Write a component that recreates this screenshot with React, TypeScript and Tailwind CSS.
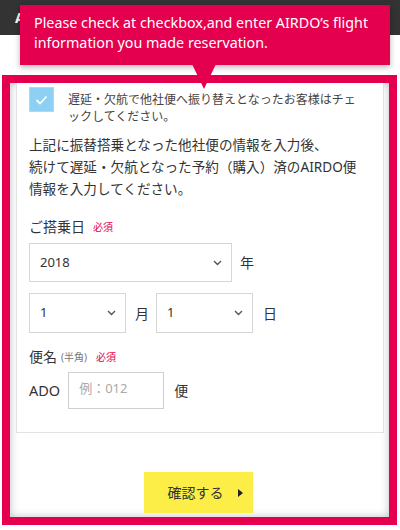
import { useState } from "react";

const PINK = "bg-[#e5004f]";

function Chevron() {
  return (
    <svg width="9" height="6" viewBox="0 0 9 6" className="text-[#555]">
      <path d="M1 1l3.5 3.5L8 1" fill="none" stroke="currentColor" strokeWidth="1.4" />
    </svg>
  );
}

function FakeSelect({ value, className }: { value: string; className: string }) {
  return (
    <div
      className={`flex items-center justify-between border border-[#d6d6d6] bg-white pl-[10px] pr-[9px] text-[13px] text-[#333] ${className}`}
    >
      <span>{value}</span>
      <Chevron />
    </div>
  );
}

export default function App() {
  const [checked, setChecked] = useState(true);
  const [flight, setFlight] = useState("");

  return (
    <div
      className="relative h-[530px] w-[400px] overflow-hidden bg-white text-[#333]"
      style={{ fontFamily: '"Noto Sans", "Noto Sans CJK JP", sans-serif' }}
    >
      {/* header, mostly hidden by the tooltip */}
      <div className="flex h-[35px] items-center bg-[#333] pl-[15px] text-[14px] font-bold text-white">A</div>

      {/* highlighted form area */}
      <div className="ml-[2px] mt-[40px] h-[450px] w-[395px] border-[8px] border-[#e5004f] shadow-[inset_0_0_8px_rgba(0,0,0,0.25)]">
        <div className="ml-[6px] mr-[5px] border-x border-b border-[#e2e2e2] bg-white pb-[23px] pl-[12px] pr-[10px] pt-[4px]">
          <label className="flex cursor-pointer items-start gap-[14px]">
            <button
              type="button"
              onClick={() => setChecked(!checked)}
              className={`flex h-[25px] w-[25px] shrink-0 items-center justify-center border border-[#cfcfcf] ${
                checked ? "bg-[#8dd0f3]" : "bg-white"
              }`}
            >
              {checked && (
                <svg width="13" height="10" viewBox="0 0 13 10">
                  <path d="M1.5 5l3.5 3.5L11.5 1.5" fill="none" stroke="white" strokeWidth="1.8" />
                </svg>
              )}
            </button>
            <span className="pt-[4px] text-[12px] leading-[17px] text-[#444]">
              遅延・欠航で他社便へ振り替えとなったお客様はチェ
              <br />
              ックしてください。
            </span>
          </label>

          <p className="mt-[9px] text-[13.6px] leading-[22px] text-[#333]">
            上記に振替搭乗となった他社便の情報を入力後、
            <br />
            続けて遅延・欠航となった予約（購入）済のAIRDO便
            <br />
            情報を入力してください。
          </p>

          <div className="mt-[17px] flex items-center gap-[8px] leading-[20px]">
            <span className="text-[14px]">ご搭乗日</span>
            <span className="text-[10px] text-[#e5004f]">必須</span>
          </div>

          <div className="mt-[6px] flex items-center gap-[8px]">
            <FakeSelect value="2018" className="h-[39px] w-[203px]" />
            <span className="text-[14px]">年</span>
          </div>

          <div className="mt-[11px] flex items-center">
            <FakeSelect value="1" className="h-[40px] w-[97px]" />
            <span className="ml-[9px] mr-[7px] text-[14px]">月</span>
            <FakeSelect value="1" className="h-[40px] w-[97px]" />
            <span className="ml-[10px] text-[14px]">日</span>
          </div>

          <div className="mt-[14px] flex items-center leading-[20px]">
            <span className="text-[14px]">便名</span>
            <span className="ml-[4px] text-[10px] text-[#777]">(半角)</span>
            <span className="ml-[9px] text-[10px] text-[#e5004f]">必須</span>
          </div>

          <div className="mt-[5px] flex items-center">
            <span className="text-[14.5px]">ADO</span>
            <input
              value={flight}
              onChange={(e) => setFlight(e.target.value)}
              placeholder="例：012"
              className="ml-[8px] h-[37px] w-[96px] border border-[#cfcfcf] px-[10px] pb-[6px] text-[13px] outline-none placeholder:text-[#aaa]"
            />
            <span className="ml-[10px] text-[14px]">便</span>
          </div>
        </div>

        <div className="mt-[39px] flex justify-center">
          <button
            type="button"
            className="ml-[-3px] flex h-[41px] w-[109px] items-center justify-end gap-[14px] bg-[#fcee46] pr-[10px] text-[14px] text-[#333]"
          >
            <span>確認する</span>
            <svg width="5" height="8" viewBox="0 0 5 8">
              <path d="M0 0l5 4-5 4z" fill="#222" />
            </svg>
          </button>
        </div>
      </div>

      {/* tooltip */}
      <div
        className={`absolute left-[20px] top-[5px] h-[60px] w-[370px] ${PINK} pl-[14px] pr-[6px] pt-[8px] text-[14.3px] leading-[20px] text-white shadow-[0_2px_6px_rgba(0,0,0,0.3)]`}
      >
        Please check at checkbox,and enter AIRDO’s flight information you made reservation.
      </div>
      <svg className="absolute left-[192px] top-[64px]" width="24" height="26" viewBox="0 0 24 26">
        <path d="M0 0h24L12 25z" fill="#e5004f" />
      </svg>
    </div>
  );
}
